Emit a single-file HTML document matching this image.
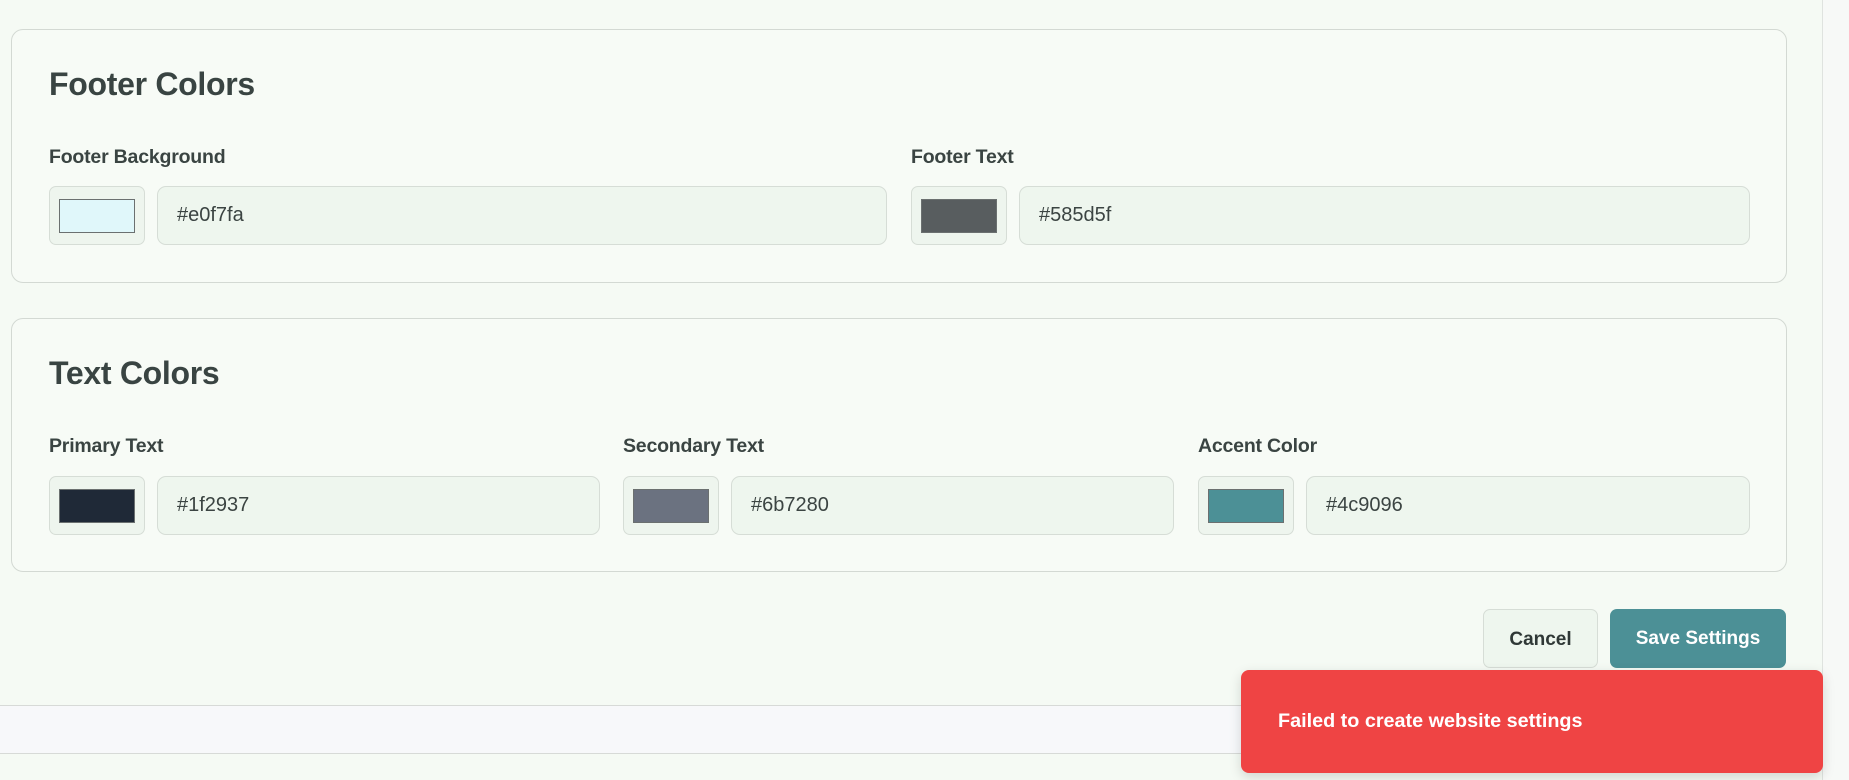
<!DOCTYPE html>
<html><head><meta charset="utf-8"><style>
*{box-sizing:border-box;margin:0;padding:0}
body{width:1849px;height:780px;overflow:hidden;background:#f5faf4;font-family:"Liberation Sans",sans-serif;color:#374140;position:relative}
.card{position:absolute;left:11px;width:1776px;background:#f7fbf6;border:1px solid #d3d9d3;border-radius:12px}
h2{position:absolute;left:37px;font-size:32px;font-weight:bold;color:#394442;letter-spacing:-0.3px}
.lab{position:absolute;font-size:19.5px;font-weight:bold;color:#3a4442;letter-spacing:-0.2px}
.sw{position:absolute;width:96px;height:59px;background:#eef5ee;border:1px solid #d6ddd6;border-radius:7px}
.sw i{position:absolute;left:9px;top:12px;width:76px;height:34px;border:1px solid #6b7070}
.in{position:absolute;height:59px;background:#eef6ee;border:1px solid #d6ddd6;border-radius:9px;font-size:20px;color:#3b4442;padding-left:19px;line-height:57px}
.btn{position:absolute;top:609px;height:59px;border-radius:7px;font-size:19px;font-weight:bold;line-height:59px;text-align:center}
</style></head><body>
<div style="position:absolute;left:1822px;top:0;width:1px;height:780px;background:#dfe3df"></div>
<div style="position:absolute;left:1823px;top:0;width:26px;height:780px;background:#f7f9f7"></div>
<div style="position:absolute;left:0;top:705px;width:1822px;height:49px;background:#f7f8fa;border-top:1px solid #d7dad7;border-bottom:1px solid #d7dad7"></div>

<div class="card" style="top:29px;height:254px">
  <h2 style="top:36px">Footer Colors</h2>
  <div class="lab" style="left:37px;top:116px">Footer Background</div>
  <div class="sw" style="left:37px;top:156px"><i style="background:#e0f7fa"></i></div>
  <div class="in" style="left:145px;top:156px;width:730px">#e0f7fa</div>
  <div class="lab" style="left:899px;top:116px">Footer Text</div>
  <div class="sw" style="left:899px;top:156px"><i style="background:#585d5f"></i></div>
  <div class="in" style="left:1007px;top:156px;width:731px">#585d5f</div>
</div>

<div class="card" style="top:318px;height:254px">
  <h2 style="top:36px">Text Colors</h2>
  <div class="lab" style="left:37px;top:116px">Primary Text</div>
  <div class="sw" style="left:37px;top:157px"><i style="background:#1f2937"></i></div>
  <div class="in" style="left:145px;top:157px;width:443px">#1f2937</div>
  <div class="lab" style="left:611px;top:116px">Secondary Text</div>
  <div class="sw" style="left:611px;top:157px"><i style="background:#6b7280"></i></div>
  <div class="in" style="left:719px;top:157px;width:443px">#6b7280</div>
  <div class="lab" style="left:1186px;top:116px">Accent Color</div>
  <div class="sw" style="left:1186px;top:157px"><i style="background:#4c9096"></i></div>
  <div class="in" style="left:1294px;top:157px;width:444px">#4c9096</div>
</div>

<div class="btn" style="left:1483px;width:115px;background:#eef6ee;border:1px solid #d6ddd6;color:#2f3836">Cancel</div>
<div class="btn" style="left:1610px;width:176px;background:#4c9096;color:#fff">Save Settings</div>

<div style="position:absolute;left:1241px;top:670px;width:582px;height:103px;background:#ef4444;border-radius:8px;box-shadow:0 4px 12px rgba(0,0,0,0.15);color:#fff;font-size:19.8px;font-weight:bold;padding-left:37px;line-height:103px">Failed to create website settings</div>
</body></html>
